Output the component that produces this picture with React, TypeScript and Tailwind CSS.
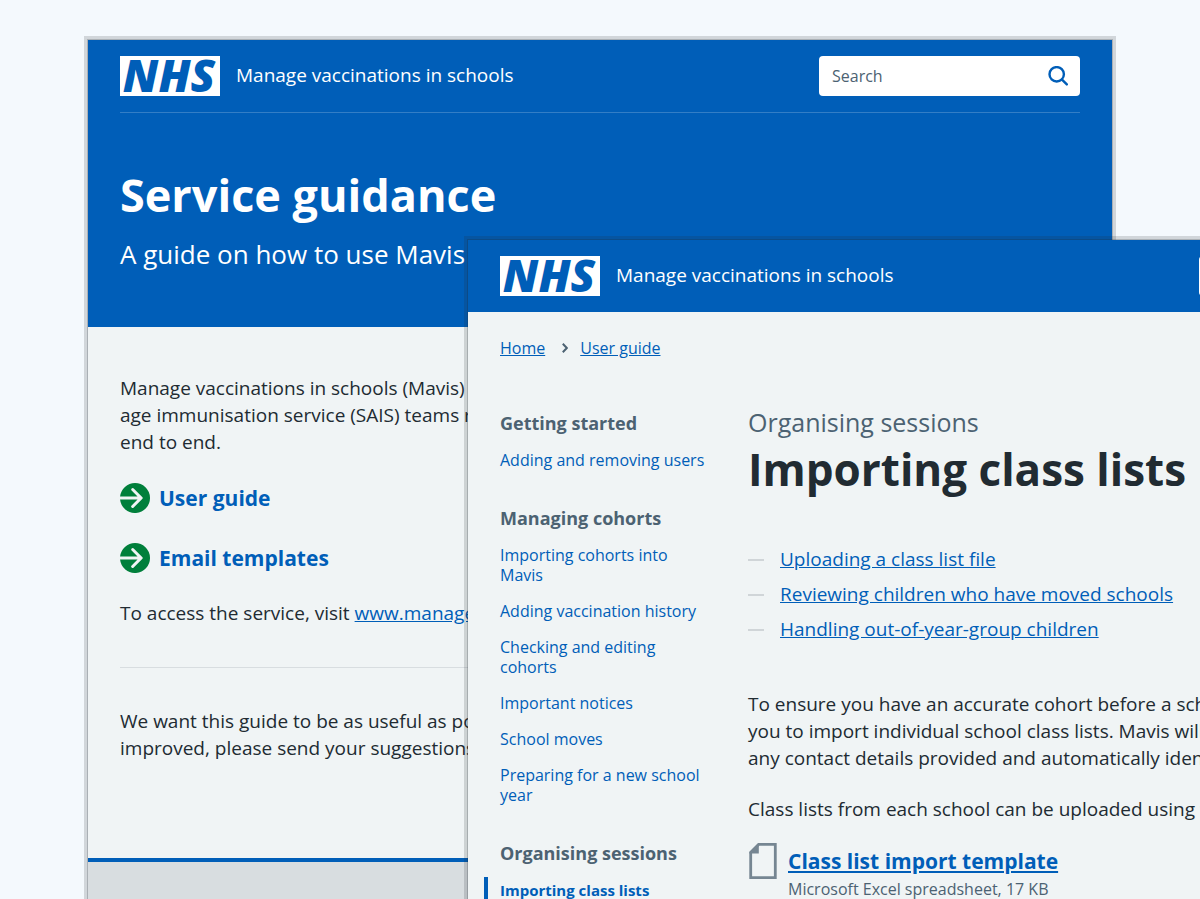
import React from "react";

const frame =
  "shadow-[0_0_0_1px_rgba(33,43,50,0.22),0_0_0_4px_rgba(33,43,50,0.17)]";

function NhsLogo() {
  return (
    <span
      role="img"
      aria-label="NHS"
      className="flex h-10 w-[100px] shrink-0 items-center justify-center bg-white pr-0.5 pb-0.5"
    >
      <span className="text-[45px] font-extrabold italic leading-10 text-[#005eb8]">NHS</span>
    </span>
  );
}

function SearchIcon() {
  return (
    <svg viewBox="0 0 20 20" className="size-5" fill="none" stroke="#005eb8" strokeWidth="2.4" strokeLinecap="round" aria-hidden="true">
      <circle cx="8.7" cy="8.3" r="7.2" />
      <path d="M14 13.6l4.8 4.8" />
    </svg>
  );
}

function ArrowCircle() {
  return (
    <svg viewBox="2 2 20 20" className="size-[30px] shrink-0" fill="#007f3b" aria-hidden="true">
      <path d="M12 2a10 10 0 0 0-9.95 9h11.64L9.74 7.05a1 1 0 0 1 1.41-1.41l5.66 5.65a1 1 0 0 1 0 1.42l-5.66 5.65a1 1 0 0 1-1.41 0 1 1 0 0 1 0-1.41L13.69 13H2.05A10 10 0 1 0 12 2z" />
    </svg>
  );
}

function DocumentIcon() {
  return (
    <svg viewBox="0 0 29 36" className="h-9 w-[29px] shrink-0" aria-hidden="true">
      <path d="M10.6 1.4H27.3V34.6H2.7V9.3z" fill="none" stroke="#768692" strokeWidth="2.8" />
      <path d="M10.8 0V10.4H1.4V9.2z" fill="#768692" />
    </svg>
  );
}

function Header({ id }: { id: string }) {
  return (
    <header className="flex h-[72px] items-center justify-between">
      <a href="#home" className="flex items-center gap-4">
        <NhsLogo />
        <span className="pb-0.5 text-[19px] leading-7 text-white">Manage vaccinations in schools</span>
      </a>
      <form role="search" className="flex h-10 w-[261px] items-center rounded bg-white pr-3">
        <label htmlFor={id} className="sr-only">Search</label>
        <input
          id={id}
          type="text"
          placeholder="Search"
          className="h-10 min-w-0 flex-1 bg-transparent pl-[13px] text-base text-[#212b32] outline-none placeholder:text-[#4c6272]"
        />
        <button type="button" aria-label="Submit search" className="flex size-5 items-center justify-center">
          <SearchIcon />
        </button>
      </form>
    </header>
  );
}

function ActionLink({ children }: { children: React.ReactNode }) {
  return (
    <a href="#guide" className="flex items-center gap-[9px] text-[21px] font-bold leading-[30px] text-[#005eb8]">
      <ArrowCircle />
      {children}
    </a>
  );
}

function GuidanceWindow() {
  return (
    <section className={`absolute inset-x-[88px] top-10 bottom-0 flex flex-col overflow-clip bg-[#f0f4f5] ${frame}`}>
      <div className="h-[287px] bg-[#005eb8] px-8 text-white">
        <Header id="search-guidance" />
        <div className="border-t border-white/20 pt-[52px]">
          <h1 className="text-[45px] font-bold leading-[60px]">Service guidance</h1>
          <p className="mt-[11px] text-[26px] leading-9">A guide on how to use Mavis</p>
        </div>
      </div>
      <div className="flex h-[531px] flex-col px-8 pt-12 text-[19px] leading-[27px] text-[#212b32]">
        <p className="whitespace-nowrap">
          Manage vaccinations in schools (Mavis)
          <br />
          age immunisation service (SAIS) teams run
          <br />
          end to end.
        </p>
        <div className="mt-[27px] flex flex-col gap-[30px]">
          <ActionLink>User guide</ActionLink>
          <ActionLink>Email templates</ActionLink>
        </div>
        <p className="mt-[27px]">
          To access the service, visit{" "}
          <a href="#service" className="text-[#005eb8] underline">www.manage</a>
        </p>
        <hr className="mt-10 border-[#d8dde0]" />
        <p className="mt-10">
          We want this guide to be as useful as possible
          <br />
          improved, please send your suggestions
        </p>
      </div>
      <footer className="flex-1 border-t-4 border-[#005eb8] bg-[#d8dde0]" />
    </section>
  );
}

const navigation = [
  { title: "Getting started", items: ["Adding and removing users"] },
  {
    title: "Managing cohorts",
    items: [
      "Importing cohorts into Mavis",
      "Adding vaccination history",
      "Checking and editing cohorts",
      "Important notices",
      "School moves",
      "Preparing for a new school year",
    ],
  },
  { title: "Organising sessions", items: ["Importing class lists"] },
];

const contents = [
  "Uploading a class list file",
  "Reviewing children who have moved schools",
  "Handling out-of-year-group children",
];

function SideNav() {
  return (
    <nav aria-label="User guide" className="flex w-[208px] shrink-0 flex-col gap-[35px]">
      {navigation.map((group) => (
        <div key={group.title}>
          <h2 className="text-lg font-bold leading-[27px] text-[#4c6272]">{group.title}</h2>
          <ul className="mt-[13px] flex flex-col gap-4 text-base leading-5 text-[#005eb8]">
            {group.items.map((item) =>
              item === "Importing class lists" ? (
                <li key={item} className="-ml-4 -mt-[3px] border-l-4 border-[#005eb8] py-[3px] pl-3 text-[15px] leading-5 font-bold">
                  <a href="#page" aria-current="page">{item}</a>
                </li>
              ) : (
                <li key={item}>
                  <a href="#page">{item}</a>
                </li>
              )
            )}
          </ul>
        </div>
      ))}
    </nav>
  );
}

function ArticleWindow() {
  return (
    <section className={`absolute top-60 bottom-0 left-[468px] w-5xl overflow-clip bg-[#f0f4f5] ${frame}`}>
      <div className="bg-[#005eb8] px-8">
        <Header id="search-article" />
      </div>
      <div className="px-8">
        <nav aria-label="Breadcrumb" className="flex items-center pt-6 text-base leading-6 text-[#005eb8]">
          <a href="#home" className="underline">Home</a>
          <svg viewBox="0 0 6 10" className="mr-3 ml-[17px] h-2.5 w-1.5" fill="none" stroke="#4c6272" strokeWidth="2" aria-hidden="true">
            <path d="M.8 .8L4.8 5L.8 9.2" />
          </svg>
          <a href="#guide" className="underline">User guide</a>
        </nav>
        <div className="flex gap-10 pt-[50px]">
          <SideNav />
          <main className="text-[19px] leading-[27px] text-[#212b32]">
            <p className="text-[25px] leading-6 text-[#4c6272]">Organising sessions</p>
            <h1 className="mt-[5px] whitespace-nowrap text-[44px] font-bold leading-[60px]">Importing class lists</h1>
            <ul className="mt-[47px] flex flex-col gap-2">
              {contents.map((item) => (
                <li key={item} className="flex items-center gap-4 text-[#005eb8]">
                  <span className="h-0.5 w-4 bg-[#d0d5d8]" />
                  <a href="#section" className="underline">{item}</a>
                </li>
              ))}
            </ul>
            <p className="mt-12 whitespace-nowrap">
              To ensure you have an accurate cohort before a school
              <br />
              you to import individual school class lists. Mavis will
              <br />
              any contact details provided and automatically identify
            </p>
            <p className="mt-6 whitespace-nowrap">Class lists from each school can be uploaded using the</p>
            <div className="mt-5 flex gap-[11px]">
              <DocumentIcon />
              <div>
                <a href="#download" className="block text-[21px] font-bold leading-9 text-[#005eb8] underline">
                  Class list import template
                </a>
                <p className="text-base leading-5 text-[#4c6272]">Microsoft Excel spreadsheet, 17 KB</p>
              </div>
            </div>
          </main>
        </div>
      </div>
    </section>
  );
}

export default function App() {
  return (
    <div className="relative h-screen overflow-hidden bg-[#f4f9fd] font-['Open_Sans','Noto_Sans',sans-serif]">
      <GuidanceWindow />
      <ArticleWindow />
    </div>
  );
}
